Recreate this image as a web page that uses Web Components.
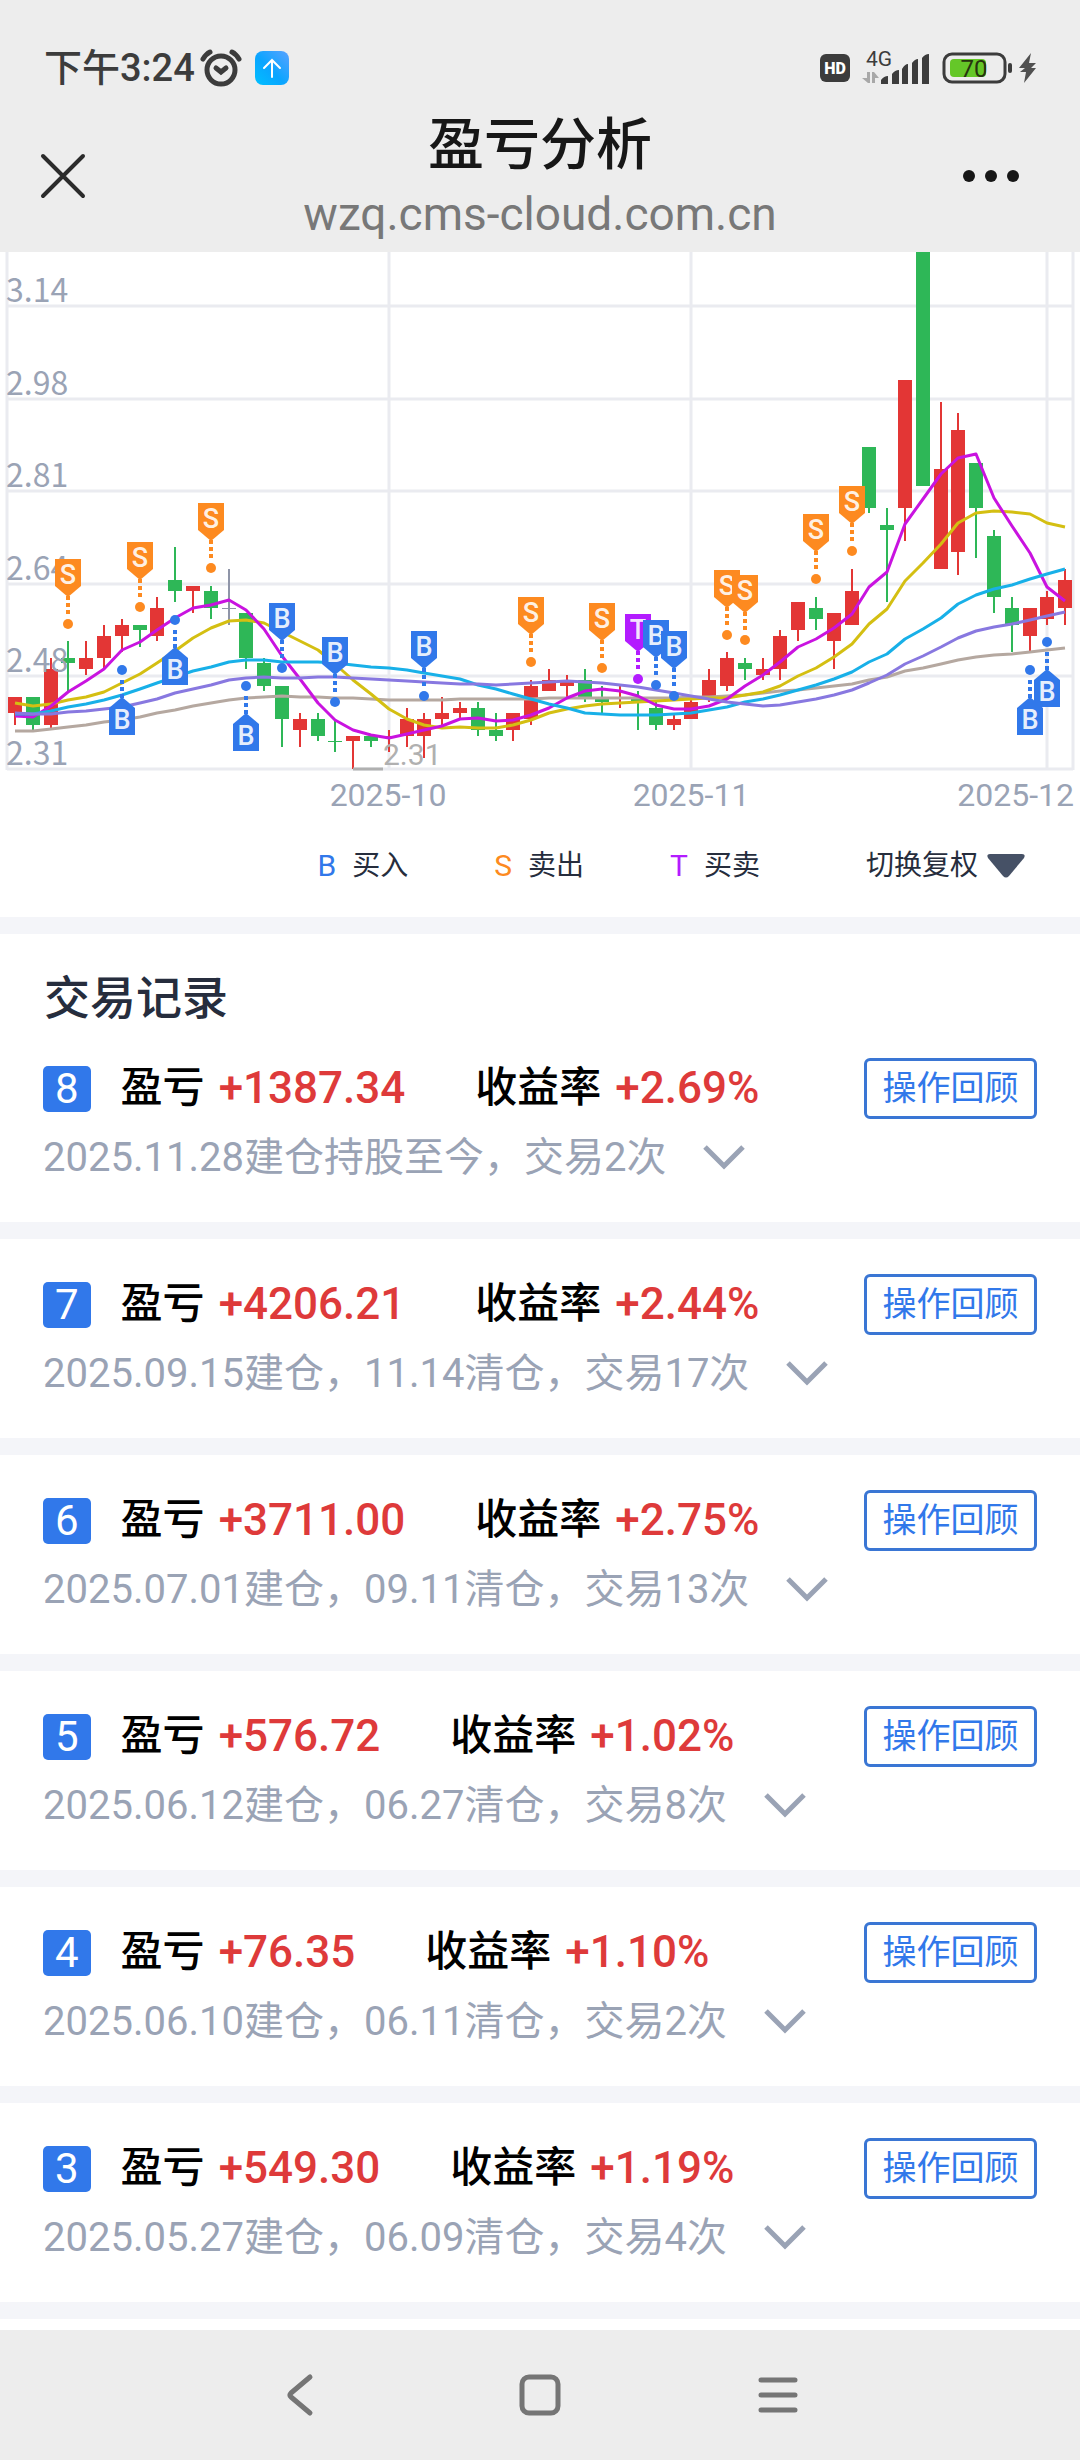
<!DOCTYPE html>
<html lang="zh-CN">
<head>
<meta charset="utf-8">
<meta name="viewport" content="width=device-width, initial-scale=1">
<title>盈亏分析</title>
<style>
   :root {
      --bar: #ededed;
      --line: #eaebf0;
      --band: #f4f5f9;
      --ink: #262d3d;
      --muted: #9aa3b5;
      --blue: #3178ea;
      --up: #e33635;
      --down: #2eb757;
      --sell: #fd8a20;
      --both: #b31cff;
   }
   body {
      display: flex;
      flex-direction: column;
      min-height: 100vh;
      margin: 0;
      background: #fff;
      font-family: Roboto, "Noto Sans CJK SC", sans-serif;
      line-height: 1.2;
      color: var(--ink);
   }
   main {
      flex: 1;
   }
</style>
</head>
<body>
   <status-bar time="下午3:24" battery="70"></status-bar>
   <page-bar host="wzq.cms-cloud.com.cn">盈亏分析</page-bar>
   <main>
      <trade-chart></trade-chart>
      <chart-legend>
         <legend-item mark="B">买入</legend-item>
         <legend-item mark="S">卖出</legend-item>
         <legend-item mark="T">买卖</legend-item>
      </chart-legend>
      <record-list>
         <span slot="title">交易记录</span>
         <trade-record no="8" profit="+1387.34" rate="+2.69%">2025.11.28建仓持股至今，交易2次</trade-record>
         <trade-record no="7" profit="+4206.21" rate="+2.44%">2025.09.15建仓，11.14清仓，交易17次</trade-record>
         <trade-record no="6" profit="+3711.00" rate="+2.75%">2025.07.01建仓，09.11清仓，交易13次</trade-record>
         <trade-record no="5" profit="+576.72" rate="+1.02%">2025.06.12建仓，06.27清仓，交易8次</trade-record>
         <trade-record no="4" profit="+76.35" rate="+1.10%">2025.06.10建仓，06.11清仓，交易2次</trade-record>
         <trade-record no="3" profit="+549.30" rate="+1.19%">2025.05.27建仓，06.09清仓，交易4次</trade-record>
      </record-list>
   </main>
   <nav-bar></nav-bar>

<script>
"use strict";
/* [ helpers ]
=================================== */
const
   reset = `
      button {
         display: flex;
         align-items: center;
         justify-content: center;
         margin: 0;
         padding: 0;
         border: 0;
         background: none;
         color: inherit;
         font: inherit;
         cursor: pointer;
      }
      svg { display: block; }
   `
;
function mount( el, html ) {
   const tpl = document.createElement( "template" );
   tpl.innerHTML = html;
   el.attachShadow( { mode: "open" } ).append( tpl.content.cloneNode( true ) );
}

/* == [ status bar ] == == == == == == == == == */
class StatusBar extends HTMLElement {
   connectedCallback() {
      mount( this, `
         <style>
            ${ reset }
            :host {
               display: flex;
               align-items: center;
               justify-content: space-between;
               box-sizing: border-box;
               height: 100px;
               padding: 36px 42px 0 44px;
               background: var(--bar);
               color: #3c3c3c;
            }
            .side { display: flex; align-items: center; }
            time { font-size: 38px; line-height: 32px; font-weight: 500; }
         </style>
         <div class="side">
            <time>${ this.getAttribute( "time" ) }</time>
            <svg width="100" height="40" viewBox="195 48 100 40" fill="none" stroke="#3c3c3c" stroke-width="5" stroke-linecap="round">
               <defs>
                  <linearGradient id="sky" x1="0" y1="1" x2="1" y2="0">
                     <stop offset="0" stop-color="#00c0ff"/>
                     <stop offset=".45" stop-color="#0aa5ff"/>
                     <stop offset="1" stop-color="#5aa2ff"/>
                  </linearGradient>
               </defs>
               <circle cx="221" cy="70" r="14"/>
               <path d="M216 68l5 4 5-4M203 59q3-5 7-7M239 59q-3-5-7-7"/>
               <rect x="255" y="51" width="34" height="34" rx="8" fill="url(#sky)" stroke="none"/>
               <path d="M272 77V60M264 68l8-8 8 8" stroke="#fff" stroke-width="2"/>
            </svg>
         </div>
         <svg width="220" height="40" viewBox="818 48 220 40" fill="#3c3c3c" font-family="Roboto, sans-serif">
            <rect x="820" y="54" width="30" height="28" rx="6"/>
            <text x="835" y="74" font-size="16" font-weight="900" fill="#fff" text-anchor="middle">HD</text>
            <text x="866" y="66" font-size="21">4G</text>
            <path d="M867 72h3v11h-2l-6-5h5zM872 83V72h2l5 6h-4v5z" fill="#a8a8a8"/>
            <path d="M881 84v-4q3-4 7-4v8zM892 84V74q3-4 7-4v14zM902 84V69q3-5 6-5v20zM912 84V63q3-4 6-4v25zM922 84V58q3-4 7-4v30z"/>
            <rect x="944" y="54" width="61" height="28" rx="8" fill="none" stroke="#3c3c3c" stroke-width="3"/>
            <rect x="950" y="59" width="36" height="18" rx="4" fill="#65c728"/>
            <text x="974" y="77" font-size="24" fill="#26340f" text-anchor="middle">${ this.getAttribute( "battery" ) }</text>
            <rect x="1008" y="63" width="4" height="10" rx="2"/>
            <path d="M1031 53l-12 15h6l-5 4h6l-2 11 12-15h-5l5-5h-7z" fill="#505050"/>
         </svg>
      ` );
   }
}
customElements.define( "status-bar", StatusBar );

/* == [ page bar ] == == == == == == == == == */
class PageBar extends HTMLElement {
   connectedCallback() {
      mount( this, `
         <style>
            ${ reset }
            :host {
               display: grid;
               grid-template-columns: 1fr auto 1fr;
               align-items: center;
               box-sizing: border-box;
               height: 152px;
               background: var(--bar);
            }
            .close { justify-self: start; margin-left: 36px; }
            .more { justify-self: end; margin-right: 56px; }
            .head { text-align: center; }
            h1 {
               margin: 0;
               font-size: 56px;
               line-height: 76px;
               font-weight: 500;
               color: #171717;
            }
            p {
               margin: 0;
               font-size: 46px;
               line-height: 62px;
               color: #787878;
            }
         </style>
         <button class="close" aria-label="关闭">
            <svg width="54" height="54" fill="none" stroke="#2b2b2b" stroke-width="4" stroke-linecap="round">
               <path d="M7 7l40 40M47 7L7 47"/>
            </svg>
         </button>
         <div class="head">
            <h1><slot></slot></h1>
            <p>${ this.getAttribute( "host" ) }</p>
         </div>
         <button class="more" aria-label="更多">
            <svg width="76" height="54" fill="#171717">
               <circle cx="21" cy="27" r="6"/><circle cx="43" cy="27" r="6"/><circle cx="65" cy="27" r="6"/>
            </svg>
         </button>
      ` );
   }
}
customElements.define( "page-bar", PageBar );

/* == [ trade chart ] == == == == == == == == == */
const
   // colour, body top, body bottom, high, low: cents above 2.31
   candles = [
      "r 13 10 13 8", "g 13 8 13 7", "r 18 8 20 7", "g 20 19 23 14", "r 20 18 23 17",
      "r 24 20 26 18", "r 26 24 27 21", "g 26 25 26 22", "r 29 24 31 23", "g 34 32 40 30",
      "r 33 32 33 28", "g 32 29 33 27", "n 29 29 36 26", "g 28 20 28 18", "g 19 15 20 14",
      "g 15 9 15 4", "r 9 7 10 4", "g 9 6 10 5", "g 5 5 9 3", "r 6 5 6 0",
      "g 6 5 6 4", "r 6 6 7 3", "r 9 6 11 4", "r 9 6 10 2", "r 10 9 13 8",
      "r 11 10 12 9", "g 11 7 12 6", "g 7 6 10 5", "r 10 7 10 5", "r 15 9 16 8",
      "r 16 14 18 14", "r 16 15 17 13", "g 16 13 18 12", "g 13 12 15 10", "r 13 13 15 11",
      "g 13 12 14 7", "g 11 8 12 7", "r 9 8 10 7", "r 12 9 13 9", "r 16 13 18 12",
      "r 20 15 21 14", "g 19 18 20 16", "r 18 17 20 16", "r 24 18 25 16", "r 30 25 30 23",
      "g 29 27 31 25", "r 28 23 28 18", "r 32 26 36 26", "g 58 47 58 46", "g 44 43 47 30",
      "r 70 47 70 41", "g 98 51 98 51", "r 54 36 66 36", "r 61 39 64 35", "g 55 47 55 38",
      "g 42 31 43 28", "g 29 26 31 21", "r 29 24 29 21", "r 31 27 32 26", "r 34 29 36 26"
   ],
   averages = [
      [ "#b5a8a0", 479,479,477,475,473,470,468,465,461,458,454,451,448,446,445,444,445,445,446,446,447,448,448,448,448,447,447,447,447,447,446,446,446,446,446,446,446,446,445,445,444,443,441,439,438,436,434,432,428,425,419,416,412,408,405,403,402,400,398,396 ],
      [ "#d4bf12", 451,454,452,448,445,440,431,422,411,399,386,376,369,368,371,380,389,398,412,428,442,457,467,473,476,475,476,476,473,468,461,457,454,452,451,450,449,448,447,446,446,443,440,434,424,416,405,392,372,357,329,311,292,271,261,259,260,262,271,275 ],
      [ "#c913e0", 464,465,454,440,429,417,398,390,378,366,356,353,348,358,377,404,427,451,468,478,483,486,482,478,474,467,466,469,468,463,456,446,439,437,439,444,453,457,457,454,447,434,423,410,395,387,376,362,335,320,272,247,222,206,202,246,274,301,335,349 ],
      [ "#18b0e8", 462,462,459,455,452,448,443,437,431,425,419,415,410,408,408,410,410,410,411,413,415,416,418,421,424,427,433,437,442,447,452,456,461,462,463,463,463,462,461,458,455,450,447,443,438,433,427,420,410,402,387,377,366,352,343,337,333,327,322,317 ],
      [ "#8878e0", 461,462,462,460,459,457,455,451,447,441,437,433,428,426,425,426,426,425,425,426,427,428,429,430,431,432,432,433,432,431,430,429,430,431,433,435,438,441,444,447,450,452,454,453,450,447,443,438,431,423,412,404,395,386,379,375,372,368,364,360 ]
   ],
   // letter, candle index, dot y, 1 when the flag hangs under the dot
   flags = [
      [ "S", 3, 372 ], [ "B", 6, 418, 1 ], [ "S", 7, 355 ], [ "B", 9, 368, 1 ], [ "S", 11, 316 ],
      [ "B", 13, 434, 1 ], [ "B", 15, 416 ], [ "B", 18, 450 ], [ "B", 23, 444 ], [ "S", 29, 410 ],
      [ "S", 33, 416 ], [ "T", 35, 427 ], [ "B", 36, 433 ], [ "B", 37, 444 ], [ "S", 40, 383 ],
      [ "S", 41, 388 ], [ "S", 45, 327 ], [ "S", 47, 299 ], [ "B", 57, 418, 1 ], [ "B", 58, 390, 1 ]
   ],
   prices = [ "3.14", "2.98", "2.81", "2.64", "2.48", "2.31" ],
   months = [ [ "2025-10", 389, 388, "middle" ], [ "2025-11", 691, 691, "middle" ], [ "2025-12", 1047, 1074, "end" ] ],
   candleColor = { r: "var(--up)", g: "var(--down)", n: "#8f95a8" },
   flagColor = { B: "var(--blue)", S: "var(--sell)", T: "var(--both)" },
   xAt = i => Math.round( 15 + i * 17.8 ),
   yAt = n => Math.round( 517 - n * 5.555 ),
   gridAt = i => Math.round( 54 + i * 92.6 )
;
class TradeChart extends HTMLElement {
   connectedCallback() {
      mount( this, `
         <style>
            ${ reset }
            :host { display: block; }
            svg { width: 100%; height: auto; }
            .axis { fill: var(--muted); font-size: 32px; }
            .price { font-family: "Noto Sans CJK SC", sans-serif; }
            .low { fill: #b0b0b0; font-size: 30px; }
            .flag { fill: #fff; fill-opacity: .9; font-size: 27px; text-anchor: middle; font-weight: 500; }
         </style>
         <svg viewBox="0 0 1080 562" role="img" aria-label="K线图">
            ${ this.grid() }
            ${ candles.map( this.candle ).join( "" ) }
            ${ averages.map( this.average ).join( "" ) }
            <path d="M353 517h30" stroke="#b0b0b0" stroke-width="3"/>
            <text class="low" x="383" y="513">2.31</text>
            ${ prices.map( ( p, i ) => `<text class="axis price" x="6" y="${ gridAt( i ) - 4 }">${ p }</text>` ).join( "" ) }
            ${ months.map( m => `<text class="axis" x="${ m[ 2 ] }" y="554" text-anchor="${ m[ 3 ] }">${ m[ 0 ] }</text>` ).join( "" ) }
            ${ flags.map( this.flag ).join( "" ) }
         </svg>
      ` );
   }
   grid() {
      let d = "M7 0V518M1073 0V518";
      prices.forEach( ( p, i ) => d += `M7 ${ gridAt( i ) }H1073` );
      months.forEach( m => d += `M${ m[ 1 ] } 0V517` );
      return `<path d="${ d }" stroke="var(--line)" stroke-width="3"/>`;
   }
   candle( row, i ) {
      const
         [ kind, top, bottom, high, low ] = row.split( " " ),
         x = xAt( i ),
         color = candleColor[ kind ],
         height = Math.max( 1, yAt( bottom ) - yAt( top ) )
      ;
      return `
         <path d="M${ x } ${ yAt( high ) }V${ yAt( low ) }" stroke="${ color }" stroke-width="2"/>
         <rect x="${ x - 7 }" y="${ yAt( top ) }" width="14" height="${ height }" fill="${ color }"/>
      `;
   }
   average( [ color, ...ys ] ) {
      return `<polyline points="${ ys.map( ( y, i ) => xAt( i ) + "," + y ).join( " " ) }" fill="none" stroke="${ color }" stroke-width="3" stroke-linejoin="round"/>`;
   }
   flag( [ letter, i, y, under ] ) {
      const
         x = xAt( i ),
         s = under ? 1 : -1
      ;
      return `
         <g fill="${ flagColor[ letter ] }">
            <circle cx="${ x }" cy="${ y }" r="5"/>
            <path d="M${ x } ${ y + s * 10 }V${ y + s * 28 }" stroke="${ flagColor[ letter ] }" stroke-width="4" stroke-dasharray="4 3"/>
            <path d="M${ x } ${ y + s * 27 }l13 ${ s * 11 }v${ s * 27 }h-26v${ s * -27 }z"/>
         </g>
         <text class="flag" x="${ x }" y="${ under ? y + 59 : y - 40 }">${ letter }</text>
      `;
   }
}
customElements.define( "trade-chart", TradeChart );

/* == [ legend ] == == == == == == == == == */
class LegendItem extends HTMLElement {
   connectedCallback() {
      const mark = this.getAttribute( "mark" );
      mount( this, `
         <style>
            :host { display: flex; align-items: center; gap: 16px; }
            b { font-size: 30px; font-weight: 400; color: ${ flagColor[ mark ] }; }
         </style>
         <b>${ mark }</b><span><slot></slot></span>
      ` );
   }
}
customElements.define( "legend-item", LegendItem );

class ChartLegend extends HTMLElement {
   connectedCallback() {
      mount( this, `
         <style>
            ${ reset }
            :host {
               display: flex;
               align-items: center;
               justify-content: flex-end;
               gap: 86px;
               box-sizing: border-box;
               height: 103px;
               padding-right: 54px;
               font-size: 28px;
            }
            button { gap: 8px; margin-left: 20px; }
         </style>
         <slot></slot>
         <button>
            切换复权
            <svg width="40" height="24" fill="#465166"><path d="M4 0h32q4 0 2 4L23 22q-3 3-6 0L2 4Q0 0 4 0z"/></svg>
         </button>
      ` );
   }
}
customElements.define( "chart-legend", ChartLegend );

/* == [ records ] == == == == == == == == == */
class RecordList extends HTMLElement {
   connectedCallback() {
      mount( this, `
         <style>
            :host { display: block; border-top: 17px solid var(--band); }
            h2 {
               margin: 0;
               padding: 39px 44px 0;
               font-size: 46px;
               line-height: 50px;
               font-weight: 500;
            }
         </style>
         <h2><slot name="title"></slot></h2>
         <slot></slot>
      ` );
   }
}
customElements.define( "record-list", RecordList );

class TradeRecord extends HTMLElement {
   connectedCallback() {
      mount( this, `
         <style>
            ${ reset }
            :host {
               display: block;
               padding: 35px 43px 38px;
               border-bottom: 17px solid var(--band);
            }
            .row, .detail { display: flex; align-items: center; }
            .row { height: 61px; font-size: 42px; font-weight: 500; color: #000; }
            .no {
               padding: 0 12px;
               border-radius: 5px;
               background: var(--blue);
               color: #fff;
               font-size: 42px;
               line-height: 46px;
               font-weight: 400;
            }
            .label { margin-left: 30px; }
            .rate { margin-left: 70px; }
            .value { margin-left: 14px; color: #de3a3a; font-size: 44px; }
            .review {
               box-sizing: border-box;
               width: 173px;
               height: 61px;
               margin-left: auto;
               border: 3px solid #3a76d4;
               border-radius: 6px;
               color: var(--blue);
               font-size: 34px;
               font-weight: 400;
            }
            .detail {
               gap: 37px;
               height: 52px;
               margin-top: 13px;
               color: var(--muted);
               font-size: 40px;
            }
         </style>
         <div class="row">
            <span class="no">${ this.getAttribute( "no" ) }</span>
            <span class="label">盈亏</span>
            <span class="value">${ this.getAttribute( "profit" ) }</span>
            <span class="rate">收益率</span>
            <span class="value">${ this.getAttribute( "rate" ) }</span>
            <button class="review">操作回顾</button>
         </div>
         <div class="detail">
            <span><slot></slot></span>
            <button aria-label="展开">
               <svg width="42" height="26" fill="none" stroke="#9aa3b5" stroke-width="5"><path d="M2 2l19 19L40 2"/></svg>
            </button>
         </div>
      ` );
   }
}
customElements.define( "trade-record", TradeRecord );

/* == [ navigation bar ] == == == == == == == == == */
class NavBar extends HTMLElement {
   connectedCallback() {
      mount( this, `
         <style>
            ${ reset }
            :host {
               display: flex;
               align-items: center;
               justify-content: center;
               gap: 180px;
               height: 130px;
               background: var(--bar);
            }
            svg { fill: none; stroke: #757575; stroke-width: 5; stroke-linecap: round; stroke-linejoin: round; }
         </style>
         <button aria-label="返回"><svg width="58" height="58"><path d="M37 11L18 27q-2 2 0 4l19 16"/></svg></button>
         <button aria-label="主页"><svg width="58" height="58"><rect x="11" y="11" width="36" height="36" rx="7"/></svg></button>
         <button aria-label="菜单"><svg width="58" height="58"><path d="M12 14h34M12 29h34M12 44h34"/></svg></button>
      ` );
   }
}
customElements.define( "nav-bar", NavBar );
</script>
</body>
</html>
